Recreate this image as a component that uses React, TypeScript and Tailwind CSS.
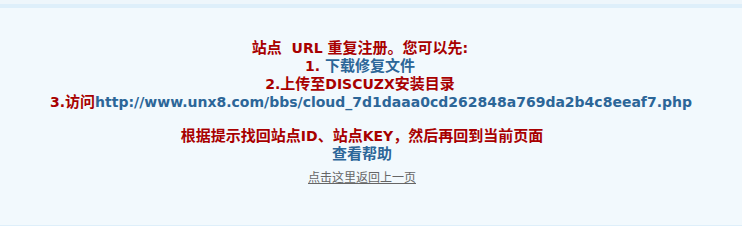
function Zh({ children }: { children: React.ReactNode }) {
  return <span className="text-[15px]">{children}</span>;
}

export default function App() {
  const font = {
    fontFamily: '"DejaVu Sans", "Noto Sans CJK SC", sans-serif',
  };
  return (
    <div className="h-[226px] bg-[#eef6fb] pt-1" style={font}>
      {/* message box */}
      <div className="h-[222px] border-t-4 border-b border-[#deeffa] bg-[#f2f9fd] pt-[31px] text-center">
        <div className="text-[14px] leading-[18px] font-bold text-[#a80000]">
          <p className="pr-[22px]">
            <Zh>站点</Zh>&nbsp; URL <Zh>重复注册。您可以先</Zh>:
          </p>
          <p className="pr-[22px]">
            1.{" "}
            <a className="text-[#2c6698]">
              <Zh>下载修复文件</Zh>
            </a>
          </p>
          <p className="pr-[22px]">
            2.<Zh>上传至</Zh>DISCUZX<Zh>安装目录</Zh>
          </p>
          <p>
            3.<Zh>访问</Zh>
            <a className="text-[#2c6698]">
              http://www.unx8.com/bbs/cloud_7d1daaa0cd262848a769da2b4c8eeaf7.php
            </a>
          </p>
          <p className="mt-[16px] pr-[18px]">
            <Zh>根据提示找回站点</Zh>ID<Zh>、站点</Zh>KEY<Zh>，然后再回到当前页面</Zh>
          </p>
          <p className="pr-[18px]">
            <a className="text-[#2c6698]">
              <Zh>查看帮助</Zh>
            </a>
          </p>
        </div>
        <p className="mt-[6px] pr-[18px] text-[12px] leading-[18px]">
          <a className="text-[#666666] underline">点击这里返回上一页</a>
        </p>
      </div>
    </div>
  );
}
